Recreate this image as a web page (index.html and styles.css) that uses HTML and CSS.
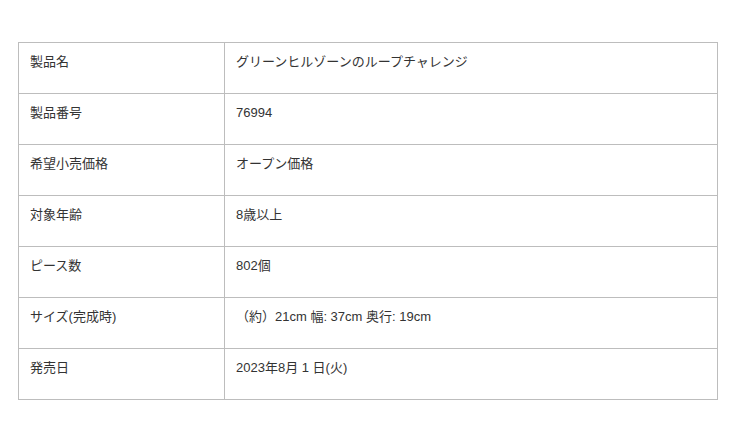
FILE: index.html
```html
<!DOCTYPE html>
<html lang="ja">
<head>
<meta charset="utf-8">
<link rel="stylesheet" href="styles.css">
</head>
<body>
<table class="spec">
  <tr><th>製品名</th><td>グリーンヒルゾーンのループチャレンジ</td></tr>
  <tr><th>製品番号</th><td>76994</td></tr>
  <tr><th>希望小売価格</th><td>オープン価格</td></tr>
  <tr><th>対象年齢</th><td>8歳以上</td></tr>
  <tr><th>ピース数</th><td>802個</td></tr>
  <tr><th>サイズ(完成時)</th><td>（約）21cm 幅: 37cm 奥行: 19cm</td></tr>
  <tr><th>発売日</th><td>2023年8月 1 日(火)</td></tr>
</table>
</body>
</html>
```
FILE: styles.css
```css
html, body {
  margin: 0;
  padding: 0;
  background: #fff;
}
body {
  padding: 42px 0 0 18px;
  font-family: "Liberation Sans", "Noto Sans CJK JP", sans-serif;
  font-size: 13px;
  color: #333;
}
.spec {
  border-collapse: collapse;
  width: 700px;
  table-layout: fixed;
}
.spec th, .spec td {
  border: 1px solid #bdbdbd;
  height: 51px;
  box-sizing: border-box;
  padding: 9px 11px;
  vertical-align: top;
  text-align: left;
  font-weight: normal;
  line-height: 19px;
}
.spec th {
  width: 206px;
}
```
